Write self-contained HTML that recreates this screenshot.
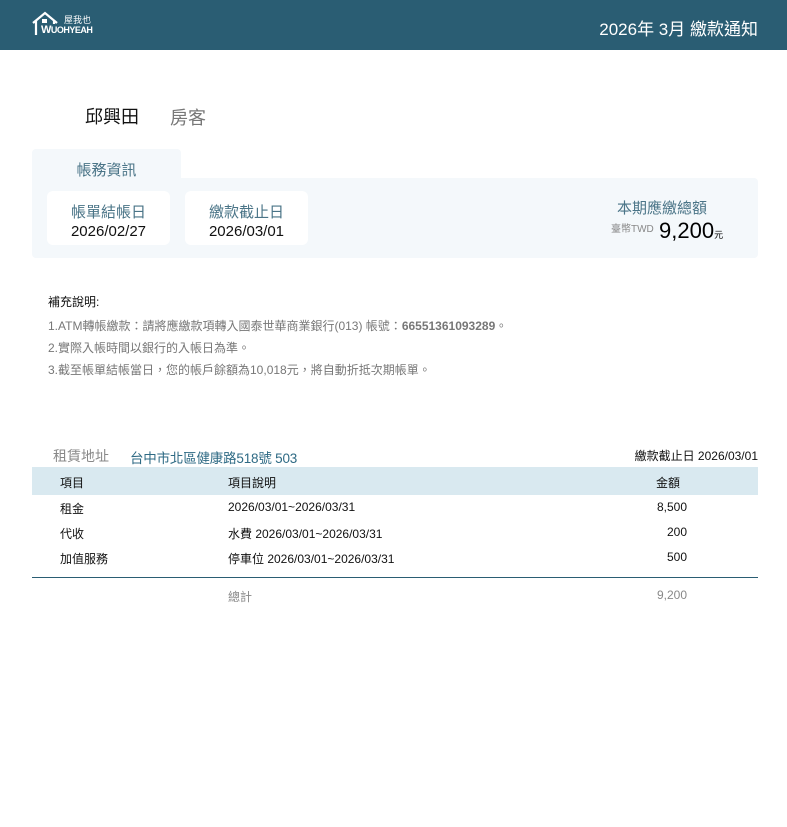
<!DOCTYPE html><html><head><meta charset="utf-8"><style>
body{margin:0;width:787px;height:827px;background:#fff;font-family:"Liberation Sans","Noto Sans CJK TC",sans-serif;position:relative;overflow:hidden}
.a{position:absolute;white-space:nowrap}
</style></head><body>
<div class="a" style="left:0;top:0;width:787px;height:50px;background:#2a5d73"></div>
<svg class="a" style="left:31px;top:11px" width="30" height="26" viewBox="0 0 30 26"><path d="M2 12 L14 2 L26 12 M5 10 V24 M23 10 V13" stroke="#fff" stroke-width="2.2" fill="none"/><rect x="11" y="8" width="5" height="4" fill="#fff"/></svg>
<div class="a" style="left:64px;top:13px;color:#fff;font-size:9px">屋我也</div>
<div class="a" style="left:41px;top:24px;color:#fff;font-size:11px;font-weight:bold;letter-spacing:-0.5px">W<span style="font-size:9px">UOHYEAH</span></div>
<div class="a" style="right:29px;top:15px;color:#fff;font-size:17px">2026年 3月 繳款通知</div>
<div class="a" style="left:85px;top:103px;font-size:18px;color:#111">邱興田</div>
<div class="a" style="left:170px;top:104px;font-size:18px;color:#777">房客</div>
<div class="a" style="left:32px;top:149px;width:149px;height:30px;background:#f4f8fb;border-radius:4px 4px 0 0"></div>
<div class="a" style="left:32px;width:149px;text-align:center;top:159px;font-size:15px;color:#4a7487">帳務資訊</div>
<div class="a" style="left:32px;top:178px;width:726px;height:80px;background:#f4f8fb;border-radius:0 4px 4px 4px"></div>
<div class="a" style="left:47px;top:191px;width:123px;height:54px;background:#fff;border-radius:6px;text-align:center"><div style="font-size:15px;color:#4a7487;margin-top:10px">帳單結帳日</div><div style="font-size:15px;color:#111;margin-top:1px">2026/02/27</div></div>
<div class="a" style="left:185px;top:191px;width:123px;height:54px;background:#fff;border-radius:6px;text-align:center"><div style="font-size:15px;color:#4a7487;margin-top:10px">繳款截止日</div><div style="font-size:15px;color:#111;margin-top:1px">2026/03/01</div></div>
<div class="a" style="left:617px;top:197px;font-size:15px;color:#4a7487">本期應繳總額</div>
<div class="a" style="left:611px;top:220px;font-size:10px;color:#888">臺幣TWD</div>
<div class="a" style="left:659px;top:218px;font-size:22px;color:#000">9,200<span style="font-size:9px">元</span></div>
<div class="a" style="left:48px;top:293px;font-size:12px;color:#111">補充說明:</div>
<div class="a" style="left:48px;top:317px;font-size:12px;color:#777">1.ATM轉帳繳款：請將應繳款項轉入國泰世華商業銀行(013) 帳號：<b>66551361093289</b>。</div>
<div class="a" style="left:48px;top:339px;font-size:12px;color:#777">2.實際入帳時間以銀行的入帳日為準。</div>
<div class="a" style="left:48px;top:361px;font-size:12px;color:#777">3.截至帳單結帳當日，您的帳戶餘額為10,018元，將自動折抵次期帳單。</div>
<div class="a" style="left:53px;top:446px;font-size:14px;color:#888">租賃地址</div>
<div class="a" style="left:130px;top:447px;font-size:13.5px;color:#2e6a84;letter-spacing:-0.2px">台中市北區健康路518號 503</div>
<div class="a" style="right:29px;top:447px;font-size:12px;color:#111">繳款截止日 2026/03/01</div>
<div class="a" style="left:32px;top:467px;width:726px;height:28px;background:#d9e9f0"></div>
<div class="a" style="left:60px;top:474px;font-size:12px;color:#111">項目</div>
<div class="a" style="left:228px;top:474px;font-size:12px;color:#111">項目說明</div>
<div class="a" style="left:656px;top:474px;font-size:12px;color:#111">金額</div>
<div class="a" style="left:60px;top:500px;font-size:12px;color:#111">租金</div>
<div class="a" style="left:228px;top:500px;font-size:12px;color:#111">2026/03/01~2026/03/31</div>
<div class="a" style="right:100px;top:500px;font-size:12px;color:#111">8,500</div>
<div class="a" style="left:60px;top:525px;font-size:12px;color:#111">代收</div>
<div class="a" style="left:228px;top:525px;font-size:12px;color:#111">水費 2026/03/01~2026/03/31</div>
<div class="a" style="right:100px;top:525px;font-size:12px;color:#111">200</div>
<div class="a" style="left:60px;top:550px;font-size:12px;color:#111">加值服務</div>
<div class="a" style="left:228px;top:550px;font-size:12px;color:#111">停車位 2026/03/01~2026/03/31</div>
<div class="a" style="right:100px;top:550px;font-size:12px;color:#111">500</div>
<div class="a" style="left:32px;top:577px;width:726px;height:1px;background:#2a5d73"></div>
<div class="a" style="left:228px;top:588px;font-size:12px;color:#888">總計</div>
<div class="a" style="right:100px;top:588px;font-size:12px;color:#888">9,200</div>
</body></html>
